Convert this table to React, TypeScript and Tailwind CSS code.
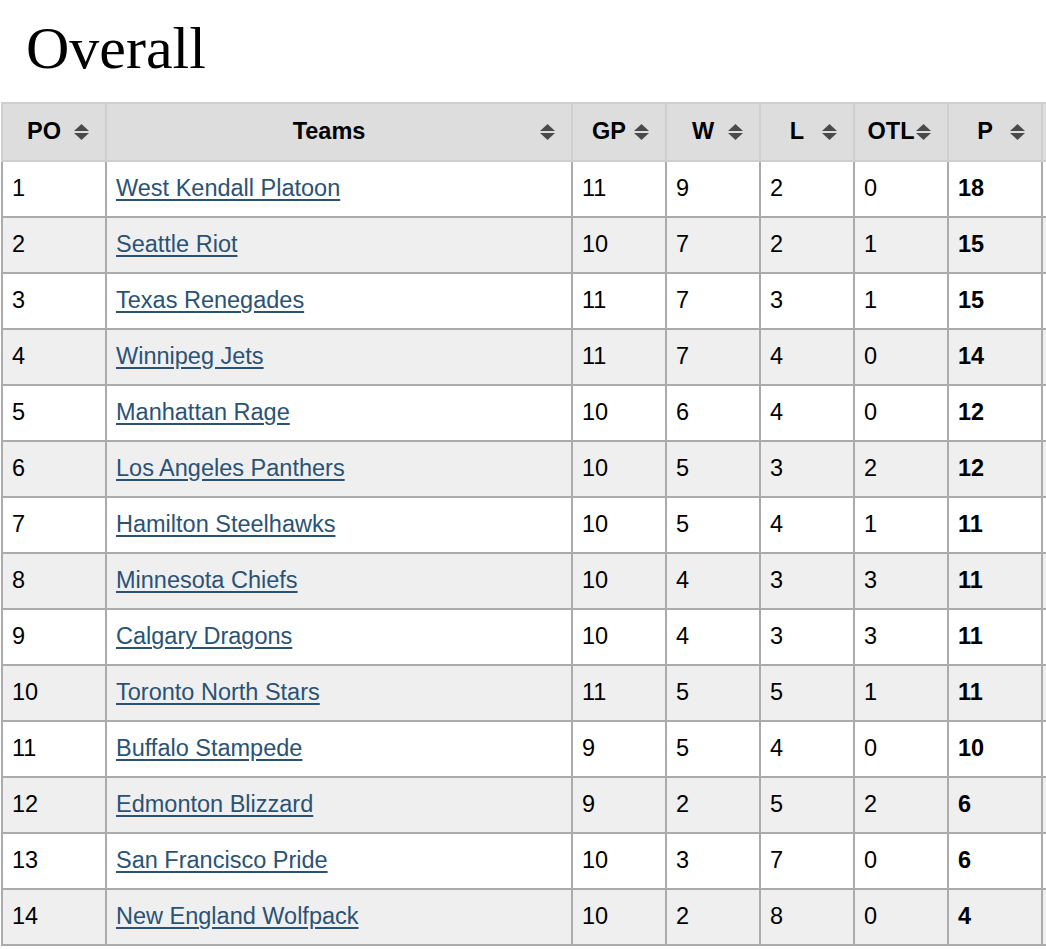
import React from "react";

const rows: [number, string, number, number, number, number, number][] = [
  [1, "West Kendall Platoon", 11, 9, 2, 0, 18],
  [2, "Seattle Riot", 10, 7, 2, 1, 15],
  [3, "Texas Renegades", 11, 7, 3, 1, 15],
  [4, "Winnipeg Jets", 11, 7, 4, 0, 14],
  [5, "Manhattan Rage", 10, 6, 4, 0, 12],
  [6, "Los Angeles Panthers", 10, 5, 3, 2, 12],
  [7, "Hamilton Steelhawks", 10, 5, 4, 1, 11],
  [8, "Minnesota Chiefs", 10, 4, 3, 3, 11],
  [9, "Calgary Dragons", 10, 4, 3, 3, 11],
  [10, "Toronto North Stars", 11, 5, 5, 1, 11],
  [11, "Buffalo Stampede", 9, 5, 4, 0, 10],
  [12, "Edmonton Blizzard", 9, 2, 5, 2, 6],
  [13, "San Francisco Pride", 10, 3, 7, 0, 6],
  [14, "New England Wolfpack", 10, 2, 8, 0, 4],
];

function SortIcon() {
  return (
    <svg
      width="17"
      height="20"
      viewBox="0 0 17 20"
      className="absolute right-[15px] top-1/2 -translate-y-1/2"
    >
      <polygon points="8.5,2 16,9 1,9" fill="#4a4a4a" />
      <polygon points="1,11 16,11 8.5,18" fill="#4a4a4a" />
    </svg>
  );
}

const headers: { label: string; w: string }[] = [
  { label: "PO", w: "w-[104px]" },
  { label: "Teams", w: "w-[466px]" },
  { label: "GP", w: "w-[94px]" },
  { label: "W", w: "w-[94px]" },
  { label: "L", w: "w-[94px]" },
  { label: "OTL", w: "w-[94px]" },
  { label: "P", w: "w-[94px]" },
];

export default function App() {
  return (
    <div
      className="w-[1046px] h-[949px] overflow-hidden bg-white text-black"
      style={{ fontFamily: '"Liberation Sans", Arial, sans-serif' }}
    >
      <h1
        className="pl-[26px] pt-[18px] text-[60px] leading-none text-black"
        style={{ fontFamily: '"Liberation Serif", "Times New Roman", serif' }}
      >
        Overall
      </h1>
      <table className="mt-[24px] ml-[1px] table-fixed border-collapse w-[1134px] text-[23.5px]">
        <thead>
          <tr className="bg-[#dddddd]">
            {headers.map((h) => (
              <th
                key={h.label}
                className={`${h.w} relative h-[58px] border-2 border-[#cfcfcf] pl-[10px] pr-[30px] text-center font-bold`}
              >
                {h.label}
                <SortIcon />
              </th>
            ))}
            <th className="w-[94px] border-2 border-[#cfcfcf]"></th>
          </tr>
        </thead>
        <tbody>
          {rows.map((r, i) => (
            <tr key={r[0]} className={i % 2 === 0 ? "bg-white" : "bg-[#efefef]"}>
              <td className="h-[56px] border-2 border-[#ababab] pl-[9px]">{r[0]}</td>
              <td className="h-[56px] border-2 border-[#ababab] pl-[9px]">
                <a href="#" className="text-[#2b5275] underline underline-offset-[3px]">
                  {r[1]}
                </a>
              </td>
              <td className="h-[56px] border-2 border-[#ababab] pl-[9px]">{r[2]}</td>
              <td className="h-[56px] border-2 border-[#ababab] pl-[9px]">{r[3]}</td>
              <td className="h-[56px] border-2 border-[#ababab] pl-[9px]">{r[4]}</td>
              <td className="h-[56px] border-2 border-[#ababab] pl-[9px]">{r[5]}</td>
              <td className="h-[56px] border-2 border-[#ababab] pl-[9px] font-bold">{r[6]}</td>
              <td className="h-[56px] border-2 border-[#ababab]"></td>
            </tr>
          ))}
        </tbody>
      </table>
    </div>
  );
}
